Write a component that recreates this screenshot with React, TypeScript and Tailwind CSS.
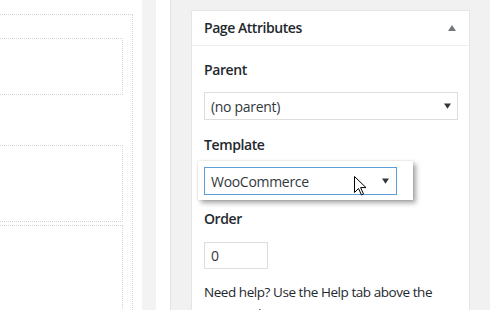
function Caret({ className }: { className: string }) {
  return (
    <svg viewBox="0 0 8 6" className={className}>
      <path d="M0 0 H8 L4 6 Z" fill="currentColor" />
    </svg>
  );
}

function Pointer() {
  return (
    <svg width="13" height="20" viewBox="0 0 13 20" className="absolute left-[156px] top-[15px]">
      <path
        d="M0.5 0.5 V16.5 L4.5 12.5 L7.5 19 L9.5 18 L6.6 11.6 H12 Z"
        fill="#fff"
        stroke="#000"
        strokeWidth="1"
        strokeLinejoin="miter"
      />
    </svg>
  );
}

export default function App() {
  return (
    <div className="flex h-[310px] w-[490px] overflow-hidden bg-[#f1f1f1] font-['Open_Sans',sans-serif] text-[14px] text-[#23282d]">
      {/* editor column, mostly off to the left */}
      <div className="w-[142px] shrink-0 overflow-hidden bg-white pt-[14px]">
        <div className="-ml-[10px] mr-[9px] h-[300px] border-t border-r border-dotted border-[#d4d4d4]">
          <div className="mr-[9px] mt-[23px] h-[57px] border-y border-r border-dotted border-[#d4d4d4]" />
          <div className="mr-[9px] mt-[50px] h-[77px] border-y border-r border-dotted border-[#d4d4d4]" />
          <div className="mr-[9px] mt-[3px] h-[90px] border-t border-r border-dotted border-[#d4d4d4]" />
        </div>
      </div>
      <div className="w-[14px] shrink-0 bg-[#f3f3f3]" />
      <div className="w-[14px] shrink-0 bg-white" />
      <div className="w-px shrink-0 bg-[#e4e4e4]" />

      {/* sidebar */}
      <div className="flex-1 pl-[20px] pt-[10px]">
        <div className="w-[279px] border border-[#e5e5e5] bg-white">
          <div className="flex h-[35px] items-center justify-between border-b border-[#eee] pl-[12px] pr-[13px]">
            <h2 className="text-[14px] font-semibold leading-[20px] tracking-[-0.45px] text-[#23282d]">Page Attributes</h2>
            <svg viewBox="0 0 8 6" className="h-[6px] w-[8px] text-[#72777c]">
              <path d="M0 6 H8 L4 0 Z" fill="currentColor" />
            </svg>
          </div>

          <div className="px-[12px] pb-[20px]">
            <p className="mt-[14px] font-semibold leading-[20px] tracking-[-0.4px]">Parent</p>
            <div className="mt-[12px] flex h-[28px] w-[254px] items-center justify-between border border-[#ddd] pl-[6px] pr-[6px] tracking-[-0.3px] text-[#32373c]">
              <span>(no parent)</span>
              <Caret className="h-[6px] w-[7px]" />
            </div>

            <p className="mt-[15px] font-semibold leading-[20px] tracking-[-0.4px]">Template</p>
            <div className="relative -ml-[6px] mt-[6px] w-[215px] bg-white p-[6px] pb-[5px] shadow-[0_0_2px_rgba(0,0,0,0.15),3px_3px_5px_rgba(0,0,0,0.35)]">
              <div className="flex h-[28px] w-[193px] items-center justify-between border border-[#5b9dd9] pl-[6px] pr-[7px] tracking-[-0.3px] text-[#32373c]">
                <span>WooCommerce</span>
                <Caret className="h-[6px] w-[7px]" />
              </div>
              <Pointer />
            </div>

            <p className="mt-[9px] font-semibold leading-[20px] tracking-[-0.4px]">Order</p>
            <div className="mt-[13px] flex h-[27px] w-[64px] items-center border border-[#ddd] pl-[6px] text-[#32373c]">0</div>

            <p className="mt-[12px] w-[236px] text-[13.5px] leading-[22px] tracking-[-0.45px]">
              Need help? Use the Help tab above the screen title.
            </p>
          </div>
        </div>
      </div>
    </div>
  );
}
